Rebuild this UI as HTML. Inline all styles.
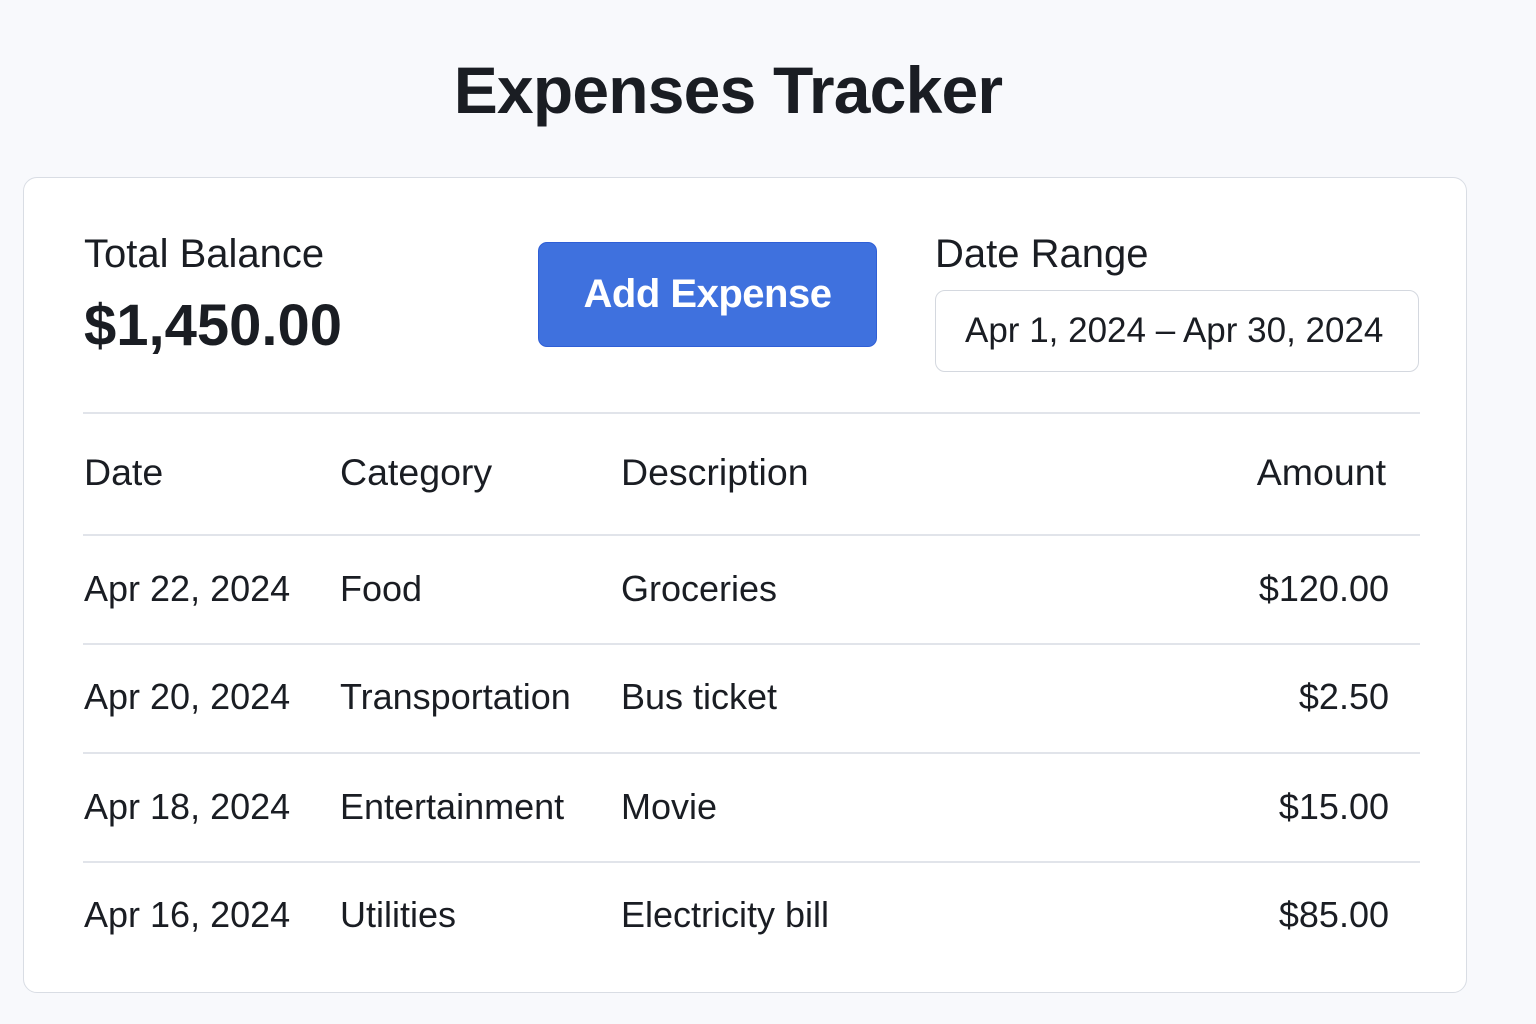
<!DOCTYPE html>
<html><head><meta charset="utf-8"><style>
*{margin:0;padding:0;box-sizing:border-box}
body{width:1536px;height:1024px;background:#f8f9fc;font-family:"Liberation Sans",sans-serif;color:#1a1d23;position:relative;overflow:hidden}
.a{position:absolute;white-space:nowrap}
h1{position:absolute;left:0;width:1456px;text-align:center;top:52px;font-size:66px;font-weight:bold;letter-spacing:-0.8px}
.card{position:absolute;left:23px;top:177px;width:1444px;height:816px;background:#fff;border:1.5px solid #d9dde4;border-radius:14px}
.btn{position:absolute;left:538px;top:242px;width:339px;height:105px;background:#3f71de;border:1.5px solid #2f5fd6;border-radius:9px;color:#fff;font-size:40px;font-weight:bold;text-align:center;line-height:102px;letter-spacing:-0.5px}
.inp{position:absolute;left:935px;top:290px;width:484px;height:82px;border:1.5px solid #d4d8df;border-radius:10px;font-size:35px;line-height:80px;padding-left:29px}
.hr{position:absolute;left:83px;width:1337px;height:1.5px;background:#e1e4ea}
.t{font-size:37.5px}
.r{font-size:36px}
</style></head><body>
<h1>Expenses Tracker</h1>
<div class="card"></div>
<div class="a" style="left:84px;top:232px;font-size:40px">Total Balance</div>
<div class="a" style="left:84px;top:292px;font-size:58px;font-weight:bold">$1,450.00</div>
<div class="btn">Add Expense</div>
<div class="a" style="left:935px;top:232px;font-size:40px">Date Range</div>
<div class="inp">Apr 1, 2024 – Apr 30, 2024</div>
<div class="hr" style="top:412px"></div>
<div class="a t" style="left:84px;top:451px">Date</div>
<div class="a t" style="left:340px;top:451px">Category</div>
<div class="a t" style="left:621px;top:451px">Description</div>
<div class="a t" style="right:150px;top:451px">Amount</div>
<div class="hr" style="top:534px"></div>
<div class="a r" style="left:84px;top:568px">Apr 22, 2024</div>
<div class="a r" style="left:340px;top:568px">Food</div>
<div class="a r" style="left:621px;top:568px">Groceries</div>
<div class="a r" style="right:147px;top:568px">$120.00</div>
<div class="hr" style="top:643px"></div>
<div class="a r" style="left:84px;top:676px">Apr 20, 2024</div>
<div class="a r" style="left:340px;top:676px">Transportation</div>
<div class="a r" style="left:621px;top:676px">Bus ticket</div>
<div class="a r" style="right:147px;top:676px">$2.50</div>
<div class="hr" style="top:752px"></div>
<div class="a r" style="left:84px;top:786px">Apr 18, 2024</div>
<div class="a r" style="left:340px;top:786px">Entertainment</div>
<div class="a r" style="left:621px;top:786px">Movie</div>
<div class="a r" style="right:147px;top:786px">$15.00</div>
<div class="hr" style="top:861px"></div>
<div class="a r" style="left:84px;top:894px">Apr 16, 2024</div>
<div class="a r" style="left:340px;top:894px">Utilities</div>
<div class="a r" style="left:621px;top:894px">Electricity bill</div>
<div class="a r" style="right:147px;top:894px">$85.00</div>
</body></html>
